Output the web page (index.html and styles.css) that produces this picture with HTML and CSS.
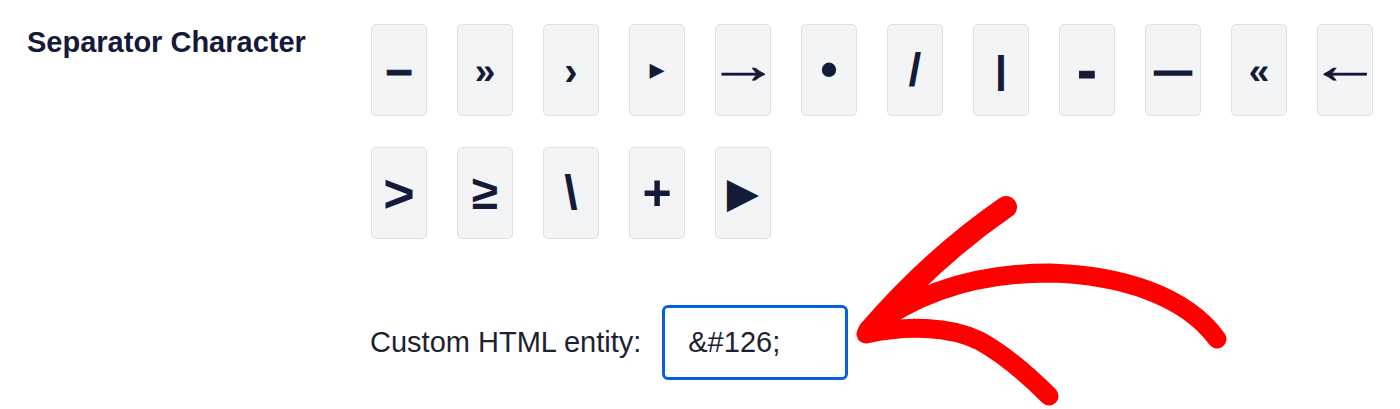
FILE: index.html
```html
<!DOCTYPE html>
<html lang="en">
<head>
<meta charset="utf-8">
<title>Separator Character</title>
<link rel="stylesheet" href="styles.css">
</head>
<body>
<div class="setting">
  <div class="setting-label">Separator Character</div>
  <div class="setting-body">
    <div class="sep-grid">
      <button class="sep-btn g-endash">&ndash;</button>
      <button class="sep-btn g-raquo">&raquo;</button>
      <button class="sep-btn g-rsaquo">&rsaquo;</button>
      <button class="sep-btn g-smtri">&#9656;</button>
      <button class="sep-btn g-arrow"><span class="arrow-glyph">&rarr;</span></button>
      <button class="sep-btn g-bull">&bull;</button>
      <button class="sep-btn g-slash">/</button>
      <button class="sep-btn g-pipe">|</button>
      <button class="sep-btn g-hyphen">-</button>
      <button class="sep-btn g-mdash">&mdash;</button>
      <button class="sep-btn g-laquo">&laquo;</button>
      <button class="sep-btn g-arrow"><span class="arrow-glyph">&larr;</span></button>
      <button class="sep-btn g-gt">&gt;</button>
      <button class="sep-btn g-ge">&ge;</button>
      <button class="sep-btn g-bslash">\</button>
      <button class="sep-btn g-plus">+</button>
      <button class="sep-btn g-tri">&#9654;</button>
    </div>
    <div class="custom-row">
      <label class="custom-label" for="custom-entity">Custom HTML entity:</label>
      <input class="custom-input" id="custom-entity" type="text" value="&amp;#126;">
    </div>
  </div>
</div>
<svg class="annotation" width="1400" height="409" viewBox="0 0 1400 409" aria-hidden="true">
  <g fill="none" stroke="#ff0000" stroke-linecap="round" stroke-linejoin="round">
    <path d="M1006 207 Q 932 258 869 331" stroke-width="22"/>
    <path d="M870 329 C 920 290, 980 273, 1050 273 C 1120 275, 1185 295, 1217 339" stroke-width="19"/>
    <path d="M866 334 C 905 325, 950 326, 980 341 C 1005 355, 1030 377, 1049 396" stroke-width="19"/>
  </g>
</svg>
</body>
</html>
```

FILE: styles.css
```css
html, body {
  margin: 0;
  padding: 0;
  background: #ffffff;
}

body {
  width: 1400px;
  height: 409px;
  overflow: hidden;
  position: relative;
  font-family: "Liberation Sans", Arial, sans-serif;
  color: #141b38;
}

.setting {
  display: flex;
  align-items: flex-start;
  padding: 24px 0 0 27px;
}

.setting-label {
  width: 344px;
  flex: none;
  padding-top: 2px;
  font-size: 29px;
  font-weight: 700;
  line-height: 32px;
  color: #141b38;
}

.setting-body {
  display: flex;
  flex-direction: column;
}

.sep-grid {
  display: grid;
  grid-template-columns: repeat(12, 56px);
  grid-auto-rows: 92px;
  gap: 31px 30px;
}

.sep-btn {
  display: flex;
  align-items: center;
  justify-content: center;
  box-sizing: border-box;
  width: 56px;
  height: 92px;
  padding: 0;
  margin: 0;
  background: #f3f4f5;
  border: 1.5px solid #dfe0e3;
  border-radius: 5px;
  color: #141b38;
  font-family: "Liberation Sans", "DejaVu Sans", sans-serif;
  font-weight: 700;
  font-size: 48px;
  line-height: 1;
  cursor: pointer;
}

.g-endash { font-size: 48px; -webkit-text-stroke: 1px #141b38; }
.g-raquo { font-size: 37px; padding-top: 3px; }
.g-rsaquo { font-size: 40px; padding-top: 2px; }
.g-smtri { font-family: "DejaVu Sans", sans-serif; font-size: 30px; padding-bottom: 2px; }
.g-arrow { font-weight: 400; font-size: 52px; padding-bottom: 10px; }
.arrow-glyph {
  display: inline-block;
  transform: scaleX(1.38);
  -webkit-text-stroke: 0.7px #141b38;
}
.g-bull { font-size: 50px; padding-bottom: 2px; }
.g-slash { font-size: 46px; }
.g-pipe { font-family: "DejaVu Sans", sans-serif; font-size: 34px; -webkit-text-stroke: 2px #141b38; }
.g-hyphen { font-size: 58px; -webkit-text-stroke: 1px #141b38; }
.g-mdash { font-size: 37px; -webkit-text-stroke: 1.5px #141b38; }
.g-laquo { font-size: 37px; padding-top: 3px; }
.g-gt { font-size: 54px; }
.g-ge { font-size: 48px; }
.g-bslash { font-size: 48px; }
.g-plus { font-size: 50px; }
.g-tri { font-family: "DejaVu Sans", sans-serif; font-size: 42px; }

.custom-row {
  display: flex;
  align-items: center;
  margin-top: 66px;
  margin-left: -1px;
  gap: 21px;
}

.custom-label {
  font-size: 29px;
  font-weight: 400;
  color: #1d2233;
}

.custom-input {
  box-sizing: border-box;
  width: 186px;
  height: 75px;
  margin: 0;
  padding: 0 0 0 23px;
  border: 3px solid #0a5fe0;
  border-radius: 6px;
  outline: none;
  background: #ffffff;
  font-family: "Liberation Sans", Arial, sans-serif;
  font-size: 29px;
  color: #1d2233;
}

.annotation {
  position: absolute;
  left: 0;
  top: 0;
  pointer-events: none;
}
```
